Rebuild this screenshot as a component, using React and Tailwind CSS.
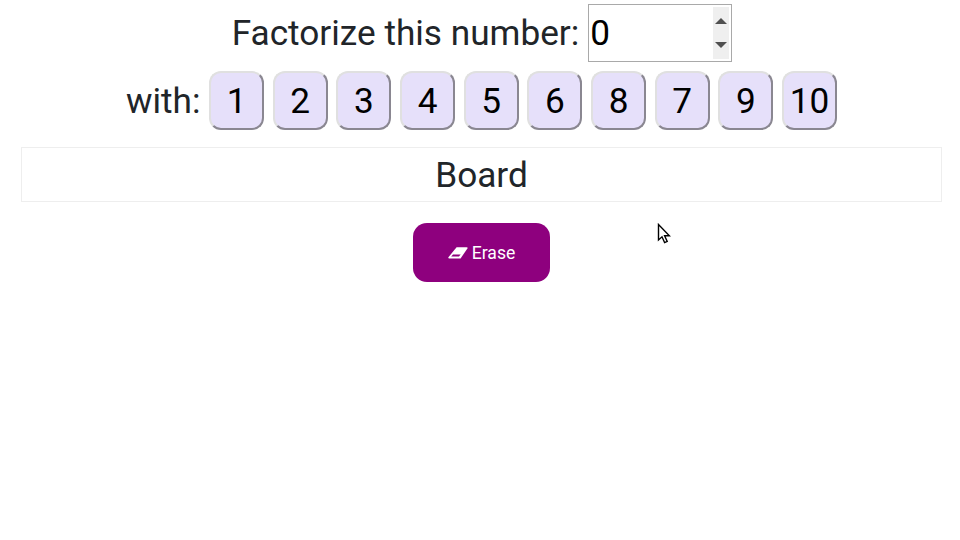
import React from "react";

const factors = [1, 2, 3, 4, 5, 6, 8, 7, 9, 10];

const EraserIcon = () => (
  <svg width="20" height="12" viewBox="0 0 20 12" className="mr-[4px]">
    <path d="M8.6 0.2H18.6Q20.2 0.2 19.4 1.4L12.6 11.4H1.4Q-0.4 11.4 0.6 10Z" fill="#ffffff" />
    <path d="M5 7.6H12.6L11 9.6H3.2Z" fill="#8e007e" />
  </svg>
);

const Cursor = () => (
  <svg width="14" height="22" viewBox="0 0 14 22" className="absolute left-[657px] top-[223px]">
    <path d="M1.5 1.5V17L5 13.8L7.6 19.6L10.2 18.4L7.6 12.8H12.4Z" fill="#ffffff" stroke="#000000" strokeWidth="1.4" strokeLinejoin="miter" />
  </svg>
);

export default function App() {
  return (
    <div className="relative h-[540px] w-[960px] overflow-hidden bg-white font-['Roboto',sans-serif] text-[#212529]">
      <div className="mt-[4px] flex h-[58px] items-center justify-center pl-[4px]">
        <span className="mr-[9px] pt-[2px] text-[35.2px] leading-none">Factorize this number:</span>
        <div className="flex h-[58px] w-[144px] items-center justify-between border border-[#a9a9a9] pl-[1px] pr-[2px]">
          <span className="pt-[2px] text-[35.2px] leading-none text-black">0</span>
          <div className="flex h-[52px] w-[16px] flex-col items-center justify-between bg-[#efefef] py-[11px]">
            <svg width="12" height="6" viewBox="0 0 12 6"><path d="M6 0L12 6H0Z" fill="#505050" /></svg>
            <svg width="12" height="6" viewBox="0 0 12 6"><path d="M0 0H12L6 6Z" fill="#505050" /></svg>
          </div>
        </div>
      </div>

      <div className="mt-[9px] flex h-[59px] items-center justify-center gap-[8.67px] pl-[3px]">
        <span className="pt-[2px] text-[35.2px] leading-none">with:</span>
        {factors.map((n) => (
          <button
            key={n}
            className="flex h-[59px] w-[55px] items-center justify-center rounded-[12px] border-2 border-t-[#e0e0e0] border-l-[#e0e0e0] border-r-[#8a8791] border-b-[#8a8791] bg-[#e6e0fa] pt-[2px] text-[35.2px] leading-none text-black"
          >
            {n}
          </button>
        ))}
      </div>

      <div className="mx-[21px] mt-[17px] flex h-[55px] w-[921px] items-center justify-center border border-[#eeeeee] pt-[2px] text-[35.2px] leading-none">
        Board
      </div>

      <div className="mt-[21px] flex justify-center pl-[3px]">
        <button className="flex h-[59px] w-[137px] items-center justify-center rounded-[14px] bg-[#8e007e] pt-[1px] text-[17.6px] text-white">
          <EraserIcon />
          Erase
        </button>
      </div>

      <Cursor />
    </div>
  );
}
